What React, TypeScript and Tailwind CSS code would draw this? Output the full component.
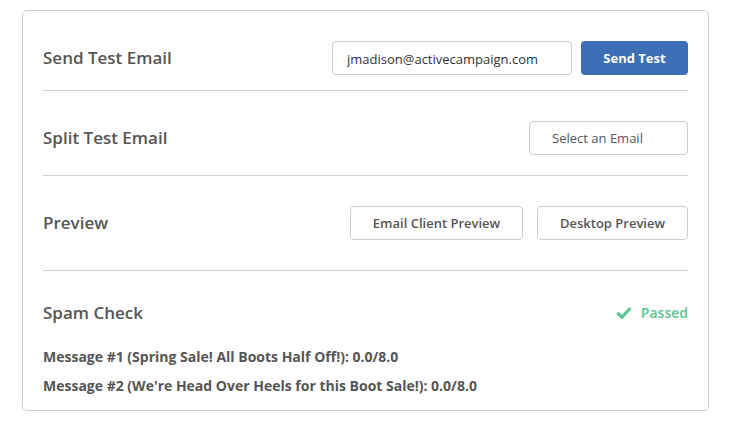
export default function App() {
  const font = { fontFamily: "'Open Sans', 'Liberation Sans', sans-serif" };
  return (
    <div className="w-[734px] h-[426px] bg-white pt-[10px] pl-[22px]" style={font}>
      <div className="w-[687px] h-[401px] border border-[#cccccc] rounded-[5px] bg-white px-[20px]">
        {/* send test */}
        <div className="flex items-center justify-between pt-[30px] pb-[15px] border-b border-[#d0d0d0]">
          <h2 className="text-[17px] font-semibold text-[#555555]">Send Test Email</h2>
          <div className="flex items-center gap-[9px]">
            <input
              readOnly
              value="jmadison@activecampaign.com"
              className="w-[240px] h-[34px] border border-[#cccccc] rounded-[4px] px-[14px] pt-[2px] text-[13px] text-[#333333] outline-none"
            />
            <button className="w-[107px] h-[34px] rounded-[4px] bg-[#3d6fb6] text-white text-[13px] font-bold pt-[2px]">
              Send Test
            </button>
          </div>
        </div>

        {/* split test */}
        <div className="flex items-center justify-between pt-[30px] pb-[20px] border-b border-[#d0d0d0]">
          <h2 className="text-[17px] font-semibold text-[#555555]">Split Test Email</h2>
          <button className="w-[159px] h-[34px] rounded-[4px] border border-[#cccccc] text-[13px] text-[#555555] pt-[2px] pr-[22px]">
            Select an Email
          </button>
        </div>

        {/* preview */}
        <div className="flex items-center justify-between pt-[30px] pb-[30px] border-b border-[#d0d0d0]">
          <h2 className="text-[17px] font-semibold text-[#555555]">Preview</h2>
          <div className="flex items-center gap-[14px]">
            <button className="w-[173px] h-[34px] rounded-[4px] border border-[#cccccc] text-[13px] font-semibold text-[#555555] pt-[2px]">
              Email Client Preview
            </button>
            <button className="w-[151px] h-[34px] rounded-[4px] border border-[#cccccc] text-[13px] font-semibold text-[#555555] pt-[2px]">
              Desktop Preview
            </button>
          </div>
        </div>

        {/* spam check */}
        <div className="pt-[29px]">
          <div className="flex items-center justify-between">
            <h2 className="text-[17px] font-semibold text-[#555555]">Spam Check</h2>
            <div className="flex items-center gap-[9px] text-[#5bc594] text-[14px] font-semibold">
              <svg width="16" height="13" viewBox="0 0 16 13">
                <path d="M1.5 7 L6 11.2 L14.5 2" fill="none" stroke="#5bc594" strokeWidth="3.2" />
              </svg>
              <span>Passed</span>
            </div>
          </div>
          <div className="mt-[21px] flex flex-col gap-[9px] text-[14px] leading-[20px] font-bold text-[#555555]">
            <p>Message #1 (Spring Sale! All Boots Half Off!): 0.0/8.0</p>
            <p>Message #2 (We're Head Over Heels for this Boot Sale!): 0.0/8.0</p>
          </div>
        </div>
      </div>
    </div>
  );
}
